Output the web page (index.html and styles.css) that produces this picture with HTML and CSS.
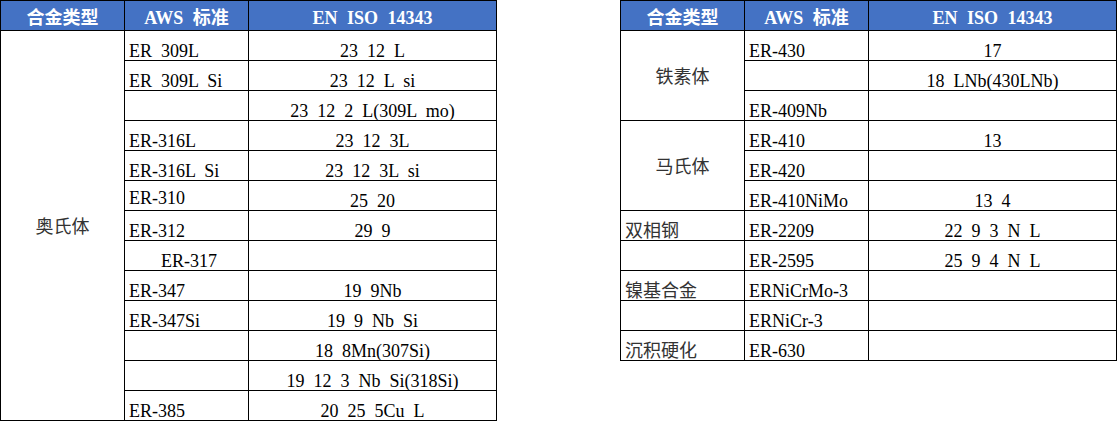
FILE: index.html
```html
<!DOCTYPE html>
<html lang="zh">
<head>
<meta charset="utf-8">
<title>不锈钢焊丝对照表</title>
<link rel="stylesheet" href="styles.css">
</head>
<body>
<div class="page">
  <table class="grid">
    <colgroup><col class="c1"><col class="c2"><col class="c3"></colgroup>
    <thead>
      <tr><th><span class="zh">合金类型</span></th><th>AWS <span class="zh">标准</span></th><th>EN ISO 14343</th></tr>
    </thead>
    <tbody>
      <tr><td class="group" rowspan="13"><span class="zh">奥氏体</span></td><td>ER 309L</td><td class="val">23 12 L</td></tr>
      <tr><td>ER 309L Si</td><td class="val">23 12 L si</td></tr>
      <tr><td></td><td class="val">23 12 2 L(309L mo)</td></tr>
      <tr><td>ER-316L</td><td class="val">23 12 3L</td></tr>
      <tr><td>ER-316L Si</td><td class="val">23 12 3L si</td></tr>
      <tr><td class="raised">ER-310</td><td class="val">25 20</td></tr>
      <tr><td>ER-312</td><td class="val">29 9</td></tr>
      <tr><td class="indent">ER-317</td><td class="val"></td></tr>
      <tr><td>ER-347</td><td class="val">19 9Nb</td></tr>
      <tr><td>ER-347Si</td><td class="val">19 9 Nb Si</td></tr>
      <tr><td></td><td class="val">18 8Mn(307Si)</td></tr>
      <tr><td></td><td class="val">19 12 3 Nb Si(318Si)</td></tr>
      <tr><td>ER-385</td><td class="val">20 25 5Cu L</td></tr>
    </tbody>
  </table>

  <table class="grid">
    <colgroup><col class="c1"><col class="c2"><col class="c3"></colgroup>
    <thead>
      <tr><th><span class="zh">合金类型</span></th><th>AWS <span class="zh">标准</span></th><th>EN ISO 14343</th></tr>
    </thead>
    <tbody>
      <tr><td class="group" rowspan="3"><span class="zh">铁素体</span></td><td>ER-430</td><td class="val">17</td></tr>
      <tr><td></td><td class="val">18 LNb(430LNb)</td></tr>
      <tr><td>ER-409Nb</td><td class="val"></td></tr>
      <tr><td class="group" rowspan="3"><span class="zh">马氏体</span></td><td>ER-410</td><td class="val">13</td></tr>
      <tr><td>ER-420</td><td class="val"></td></tr>
      <tr><td>ER-410NiMo</td><td class="val">13 4</td></tr>
      <tr><td><span class="zh">双相钢</span></td><td>ER-2209</td><td class="val">22 9 3 N L</td></tr>
      <tr><td></td><td>ER-2595</td><td class="val">25 9 4 N L</td></tr>
      <tr><td><span class="zh">镍基合金</span></td><td>ERNiCrMo-3</td><td class="val"></td></tr>
      <tr><td></td><td>ERNiCr-3</td><td class="val"></td></tr>
      <tr><td><span class="zh">沉积硬化</span></td><td>ER-630</td><td class="val"></td></tr>
    </tbody>
  </table>
</div>
</body>
</html>
```

FILE: styles.css
```css
html, body {
  margin: 0;
  padding: 0;
  background: #ffffff;
}

.page {
  display: flex;
  align-items: flex-start;
  gap: 123px;
  font-family: "Liberation Serif", "Noto Sans CJK SC", serif;
  font-size: 18px;
  word-spacing: 4.5px;
  color: #000000;
}

.grid {
  border-collapse: collapse;
  table-layout: fixed;
  width: 497px;
  border: 1px solid #000;
}

.grid col.c1 { width: 124px; }
.grid col.c2 { width: 124px; }
.grid col.c3 { width: 248px; }

.grid tr {
  height: 30px;
}

.grid th,
.grid td {
  border: 1px solid #000;
  padding: 0 4px;
  white-space: nowrap;
  overflow: hidden;
}

.grid th {
  background: #4472c4;
  color: #ffffff;
  font-weight: bold;
  font-size: 18px;
  word-spacing: 5px;
  text-align: center;
  vertical-align: bottom;
  line-height: 18px;
  padding-bottom: 3px;
}

.grid th .zh {
  color: #ffffff;
  word-spacing: 0;
}

.grid td {
  text-align: left;
  vertical-align: bottom;
  line-height: 16px;
  padding-bottom: 1px;
}

.grid td.val {
  text-align: center;
}

.grid td.group {
  text-align: center;
  vertical-align: middle;
  padding-bottom: 0;
}

.grid td.indent {
  padding-left: 36px;
}

.grid td.raised {
  padding-bottom: 4px;
}

.zh {
  font-family: "Noto Sans CJK SC", sans-serif;
  font-size: 18px;
  color: #333333;
  line-height: 18px;
}
```
